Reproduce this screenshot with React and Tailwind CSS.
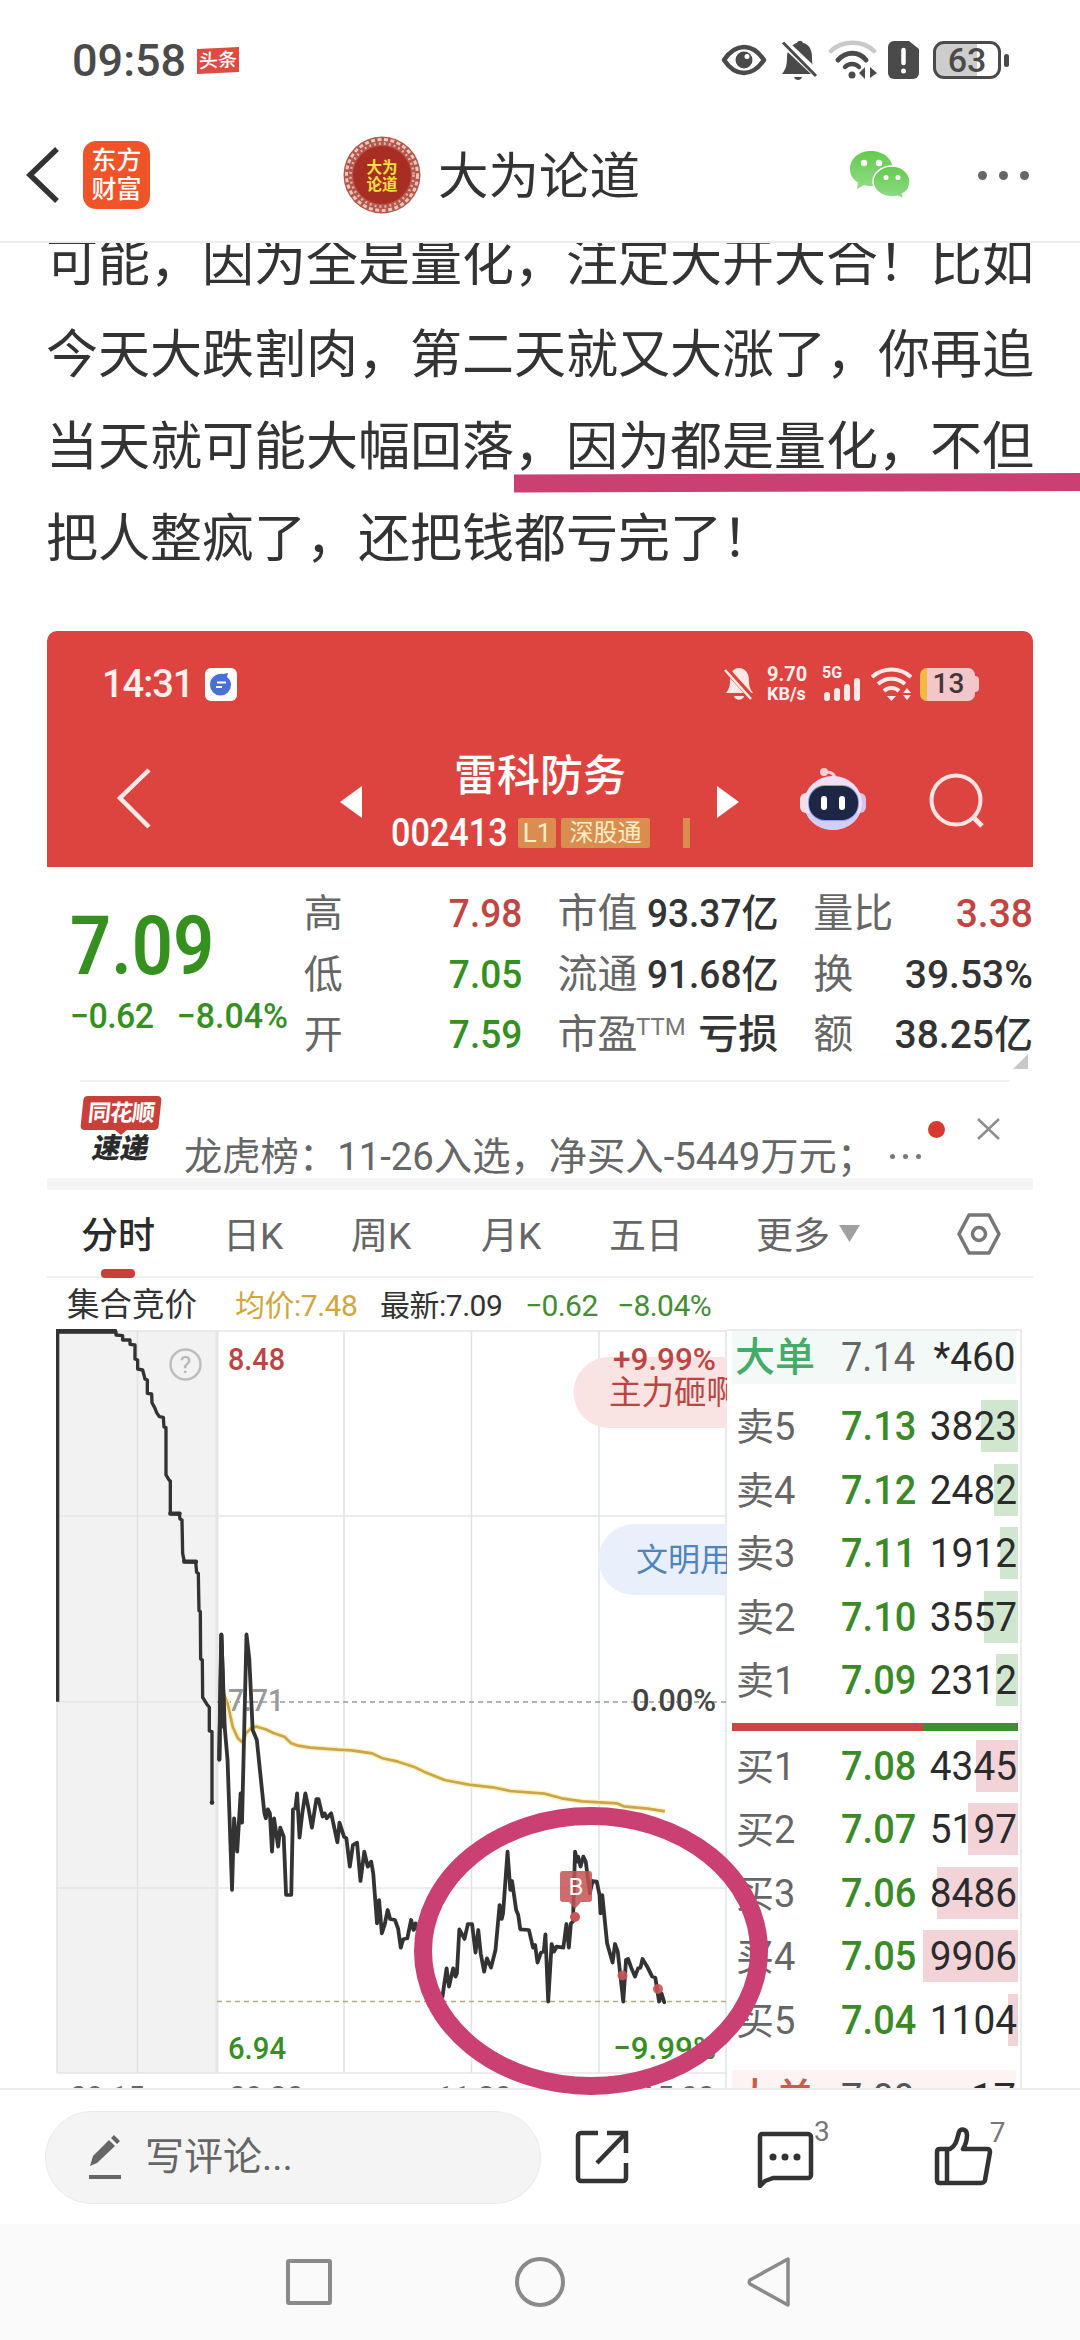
const tabs = [
  { label: '日K', cls: 'ml-[66px] w-[62px]' },
  { label: '周K', cls: 'ml-[66px] w-[62px]' },
  { label: '月K', cls: 'ml-[68px] w-[62px]' },
  { label: '五日', cls: 'ml-[66px] w-[74px]' },
];

const sells = [
  { name: '卖5', price: '7.13', qty: '3823', bar: 37 },
  { name: '卖4', price: '7.12', qty: '2482', bar: 24 },
  { name: '卖3', price: '7.11', qty: '1912', bar: 18 },
  { name: '卖2', price: '7.10', qty: '3557', bar: 34 },
  { name: '卖1', price: '7.09', qty: '2312', bar: 22 },
];

const buys = [
  { name: '买1', price: '7.08', qty: '4345', bar: 42 },
  { name: '买2', price: '7.07', qty: '5197', bar: 50 },
  { name: '买3', price: '7.06', qty: '8486', bar: 81 },
  { name: '买4', price: '7.05', qty: '9906', bar: 95 },
  { name: '买5', price: '7.04', qty: '1104', bar: 10 },
];

const auctionLine =
  '53,1205 53,95 228,95 228,105 248,107 248,120 270,120 270,133 285,135 285,177 293,180 293,207 308,210 315,237 322,240 322,280 335,282 336,308 345,325 350,338 358,350 370,352 372,381 378,383 378,525 388,541 391,543 391,641 418,643 420,657 426,660 428,760 433,785 467,786 470,817 475,820 477,932 481,935 482,1077 487,1080 488,1192 500,1212 508,1222 508,1293 516,1295 516,1510';

const priceLine =
  '56,480 62,103 72,385 80,480 93,870 99,655 108,755 118,580 122,668 135,103 143,175 153,390 165,420 187,640 191,655 197,628 203,640 209,755 215,655 227,740 233,683 243,710 250,885 265,885 270,628 277,625 282,580 289,713 297,640 306,580 315,625 325,683 338,597 344,597 356,650 362,640 368,655 381,640 399,727 405,668 418,710 425,715 435,800 444,735 456,728 466,843 477,755 487,800 497,785 503,820 514,970 520,900 528,1000 536,975 545,930 552,957 566,960 575,985 583,1043 590,1018 602,1015 607,990 613,960 620,990 626,970 645,1040 670,1100 690,1205 704,1190 716,1105 723,1160 735,1105 742,1130 746,1120 753,988 768,1017 778,972 790,972 800,1058 808,990 815,1060 825,1115 833,1075 845,1103 858,1050 870,915 876,957 880,940 893,755 901,870 906,843 918,930 924,945 930,988 955,990 967,1043 973,1035 980,1088 990,1058 998,1055 1003,1003 1011,1205 1021,1032 1028,1055 1035,1040 1055,1043 1064,972 1071,1043 1077,970 1083,965 1089,755 1095,785 1098,770 1105,800 1113,770 1120,785 1132,880 1140,843 1152,845 1160,885 1163,940 1168,885 1182,1030 1198,1088 1205,1032 1213,1055 1229,1205 1237,1080 1243,1077 1252,1103 1263,1130 1272,1105 1279,1103 1285,1077 1300,1103 1313,1130 1322,1133 1333,1205 1340,1180 1348,1207';

const averageLine =
  '68,280 80,310 95,380 110,415 125,428 133,400 150,383 165,380 190,388 215,400 245,410 265,430 285,437 320,443 400,449 440,451 500,460 530,475 575,485 620,500 650,515 710,540 780,554 850,562 900,573 1000,581 1050,595 1110,604 1210,610 1230,619 1300,626 1350,634';

function StatusBar() {
  return (
    <div className="flex h-[120px] items-center pl-[72px] text-[#4a4a4a]">
      <span className="w-[114px] text-[45px] leading-none font-medium">09:58</span>
      <span className="ml-[11px] mt-px flex h-[25px] w-[42px] -skew-y-3 items-center justify-center bg-[#dc4c43] text-[19px] leading-none font-medium text-white">头条</span>
      <div className="ml-auto flex items-center pr-[71px]">
        <svg className="h-[32px] w-[46px]" viewBox="0 0 46 32">
          <path d="M3 16C9 7 16 3 23 3s14 4 20 13c-6 9-13 13-20 13S9 25 3 16z" fill="none" stroke="#4a4a4a" strokeWidth="4.5" strokeLinejoin="round" />
          <circle cx="23" cy="16" r="8.5" fill="#4a4a4a" />
          <circle cx="26" cy="12.500" r="2.500" fill="#fff" />
        </svg>
        <svg className="ml-[13px] h-[42px] w-[38px]" viewBox="0 0 38 42">
          <path d="M2 35c4-5 5-9 5-17 0-7 5-13 10-14 1-3 5-3 6 0 6 1 9 7 9 14 0 8 1 12 3 17z" fill="#4a4a4a" />
          <path d="M3 3l35 33" stroke="#fff" strokeWidth="8" />
          <path d="M3 3.500L36 37" stroke="#4a4a4a" strokeWidth="3" />
          <path d="M14 38h8c-1 4-7 4-8 0z" fill="#4a4a4a" />
        </svg>
        <svg className="ml-[10px] h-[40px] w-[50px]" viewBox="0 0 50 40" fill="none" strokeLinecap="round">
          <path d="M3 11C14 0 35 0 46 11" stroke="#cacaca" strokeWidth="4.500" />
          <path d="M10 20c8-9 21-9 28 0" stroke="#4a4a4a" strokeWidth="5" />
          <path d="M17 27c4-4 10-4 14 0" stroke="#4a4a4a" strokeWidth="4.500" />
          <circle cx="24" cy="35" r="3.500" fill="#4a4a4a" />
          <path d="M37 27v12l-6-6zM42 38V27l7 6z" fill="#4a4a4a" />
        </svg>
        <svg className="ml-[10px] h-[38px] w-[31px]" viewBox="0 0 31 38">
          <path d="M6 0h15l10 8v24a6 6 0 0 1-6 6H6a6 6 0 0 1-6-6V6a6 6 0 0 1 6-6z" fill="#4a4a4a" />
          <path d="M15.500 9v13" stroke="#fff" strokeWidth="4.500" strokeLinecap="round" />
          <circle cx="15.500" cy="30" r="2.500" fill="#fff" />
        </svg>
        <div className="ml-[14px] flex h-[38px] w-[68px] items-center justify-center rounded-[11px] border-[3.5px] border-[#4a4a4a] bg-linear-to-r from-[#cdcdcd] from-66% to-white to-66% text-[34px] leading-none font-medium">
          63
        </div>
        <div className="ml-[3px] h-[13px] w-[5px] rounded-full bg-[#4a4a4a]" />
      </div>
    </div>
  );
}

function Header() {
  return (
    <header className="flex h-[123px] items-center border-b-2 border-[#ececec] pb-[11px] pl-[25px]">
      <svg className="h-[58px] w-[36px]" viewBox="0 0 36 58">
        <path d="M32 3L5 29l27 26" fill="none" stroke="#333" strokeWidth="5.500" />
      </svg>
      <div className="ml-[22px] flex h-[68px] w-[67px] flex-col items-center justify-center rounded-[13px] bg-[#ee5428] text-[25px] leading-[29px] font-medium text-white">
        <span>东方</span>
        <span>财富</span>
      </div>
      <svg className="ml-[193px] h-[78px] w-[78px]" viewBox="0 0 78 78">
        <circle cx="39" cy="39" r="38.500" fill="#b5564b" />
        <circle cx="39" cy="39" r="35.500" fill="none" stroke="#e9c8bd" strokeWidth="3" strokeDasharray="4 2.500" />
        <circle cx="39" cy="39" r="31.500" fill="none" stroke="#dfb3a7" strokeWidth="2.500" strokeDasharray="2 3" />
        <circle cx="39" cy="39" r="29" fill="#a82e23" />
        <text x="39" y="37" textAnchor="middle" fontSize="15.500" fontWeight="700" fill="#f6e13c">大为</text>
        <text x="39" y="54" textAnchor="middle" fontSize="15.500" fontWeight="700" fill="#f6e13c">论道</text>
      </svg>
      <h1 className="mt-[5px] ml-[17px] w-[204px] text-[50.5px] leading-none whitespace-nowrap text-[#333]">大为论道</h1>
      <svg className="ml-[207px] h-[50px] w-[62px]" viewBox="0 0 62 50">
        <defs>
          <linearGradient id="wx" x1="0" y1="0" x2="0" y2="1">
            <stop offset="0" stopColor="#62cb4d" />
            <stop offset="1" stopColor="#92db88" />
          </linearGradient>
        </defs>
        <path d="M22 1C10 1 1 8.500 1 19c0 6 3 10.500 8 13.500L8 39l7-4c2 .7 5 1 7 1 12 0 22-7 22-17S34 1 22 1z" fill="url(#wx)" />
        <path d="M43 16c-10.500 0-19 7-19 15.500S32.500 47 43 47c2 0 4-.3 6-.8l6 3-1.500-5C58.500 41.500 61 37 61 31.500 61 23 53 16 43 16z" fill="url(#wx)" stroke="#fff" strokeWidth="1.500" />
        <circle cx="15" cy="13" r="3.200" fill="#fff" />
        <circle cx="30" cy="13" r="3.200" fill="#fff" />
        <circle cx="37" cy="27.500" r="2.500" fill="#fff" />
        <circle cx="49" cy="27.500" r="2.500" fill="#fff" />
      </svg>
      <div className="ml-[67px] flex gap-3">
        <i className="size-[9px] rounded-full bg-[#666]" />
        <i className="size-[9px] rounded-full bg-[#666]" />
        <i className="size-[9px] rounded-full bg-[#666]" />
      </div>
    </header>
  );
}

function StockHeader() {
  return (
    <div className="h-[236px] rounded-t-[10px] bg-[#dd433f] text-white">
      <div className="flex h-[106px] items-center pl-[55px] text-[#fff0ee]">
        <span className="text-[38px] leading-none font-medium tracking-[-1px]">14:31</span>
        <span className="ml-[12px] flex h-[33px] w-[32px] items-center justify-center rounded-[6px] bg-white">
          <svg className="h-[24px] w-[24px]" viewBox="0 0 24 24">
            <path d="M1 13C1 5 8 1 14 2l5-1-1 4c3 2 4 5 4 8a10 10 0 0 1-21 0z" fill="#4a6fd6" />
            <path d="M8 10.500h9M7 15h6" stroke="#fff" strokeWidth="2.200" />
          </svg>
        </span>
        <div className="ml-auto flex items-center pr-[54px]">
          <svg className="h-[34px] w-[30px]" viewBox="0 0 30 34">
            <path d="M2 26c3-4 4-7 4-12C6 6 9 1 15 1s10 5 10 13c0 5 1 8 4 12zM10 29h10c-1 5-9 5-10 0z" fill="#ffe9e7" />
            <path d="M2 2l26 29" stroke="#dd433f" strokeWidth="6" />
            <path d="M1 3l26 29" stroke="#ffe9e7" strokeWidth="2.500" />
          </svg>
          <div className="ml-[13px] flex w-[41px] flex-col text-[20px] leading-[19px] font-bold">
            <span>9.70</span>
            <span className="text-[18px]">KB/s</span>
          </div>
          <div className="ml-[14px] w-[42px]">
            <div className="h-[10px] text-[16px] leading-[9px] font-bold">5G</div>
            <div className="-mt-[1px] flex h-[24px] items-end gap-[4.5px] pl-[2px]">
              <i className="h-[9px] w-[5.5px] rounded-sm bg-[#ffe9e7]" />
              <i className="h-[13px] w-[5.500px] rounded-sm bg-[#ffe9e7]" />
              <i className="h-[17px] w-[5.500px] rounded-sm bg-[#ffe9e7]" />
              <i className="h-[23px] w-[5.500px] rounded-sm bg-[#ffe9e7]" />
            </div>
          </div>
          <svg className="ml-[7px] h-[34px] w-[41px]" viewBox="0 0 41 34" fill="none" stroke="#ffe9e7" strokeWidth="4">
            <path d="M1 10c11-10 28-10 39 0M7 17c8-7 19-7 27 0M13 24c4-4 11-4 15 0" />
            <path d="M16 29h9l-4.500 5zM32 26l4-5 4 5zM32 28l4 5 4-5z" fill="#ffe9e7" stroke="none" />
          </svg>
          <div className="ml-[8px] flex h-[33px] w-[55px] items-center justify-center rounded-[7px] border-l-[7px] border-[#f4b942] bg-[#f3c6c9] pr-[5px] text-[28px] leading-none font-medium text-[#433536]">
            13
          </div>
          <div className="h-[16px] w-[4px] rounded-r bg-[#f3c6c9]" />
        </div>
      </div>
      <div className="flex h-[124px] items-center pl-[69px]">
        <svg className="h-[62px] w-[36px]" viewBox="0 0 36 62">
          <path d="M33 2L4 30l29 29" fill="none" stroke="#ffe9e7" strokeWidth="4.500" />
        </svg>
        <svg className="mt-[5px] ml-[188px] h-[32px] w-[22px]" viewBox="0 0 22 32">
          <path d="M22 0v32L0 16z" fill="#fff" />
        </svg>
        <div className="ml-[29px] w-[326px]">
          <div className="pl-[63px] text-[43px] leading-[50px] font-medium">雷科防务</div>
          <div className="mt-[17px] flex h-[30px] items-center">
            <span className="w-[127px] origin-left scale-x-[0.9] text-[38px] leading-none font-medium">002413</span>
            <span className="flex h-[30px] w-[38px] items-center justify-center rounded-[2px] bg-[#d98e4f] text-[26px] leading-none text-[#ffecc4]">L1</span>
            <span className="ml-[5px] flex h-[30px] w-[89px] items-center justify-center rounded-[2px] bg-[#d98e4f] text-[24px] leading-none text-[#ffecc4]">深股通</span>
            <span className="ml-[33px] h-[30px] w-[7px] bg-[#d98e4f]" />
          </div>
        </div>
        <svg className="mt-[5px] h-[32px] w-[22px]" viewBox="0 0 22 32">
          <path d="M0 0v32l22-16z" fill="#fff" />
        </svg>
        <svg className="ml-[61px] h-[64px] w-[66px]" viewBox="0 0 66 64">
          <path d="M35 12c0-5-3-7-9-7" fill="none" stroke="#fbd0d4" strokeWidth="3" />
          <circle cx="24" cy="5" r="4" fill="#fbd0d4" />
          <rect x="0" y="26" width="12" height="20" rx="6" fill="#fbdde6" />
          <rect x="54" y="26" width="12" height="20" rx="6" fill="#d5c3f3" />
          <ellipse cx="33" cy="36" rx="29" ry="27" fill="#f1dff3" />
          <path d="M6 46c8 22 46 22 54 0z" fill="#d3cdf8" />
          <rect x="8" y="18" width="51" height="36" rx="17" fill="#8ba0ea" />
          <rect x="9" y="19" width="49" height="34" rx="16" fill="#1d2745" />
          <rect x="21" y="29" width="6" height="14" rx="3" fill="#fff" />
          <rect x="39" y="29" width="6" height="14" rx="3" fill="#fff" />
        </svg>
        <svg className="mt-[3px] ml-[63px] h-[56px] w-[56px]" viewBox="0 0 56 56" fill="none" stroke="#ffe4e2" strokeWidth="4">
          <circle cx="27" cy="27" r="24.500" />
          <path d="M44 44l9 9" strokeWidth="5" />
        </svg>
      </div>
    </div>
  );
}

function Stats() {
  return (
    <div className="flex h-[213px] pt-[17px] text-[39px] text-[#333]">
      <div className="w-[257px] pl-[23px] text-[#35901f]">
        <div className="mt-[17px] h-[87px] w-[200px] origin-left scale-x-[0.88] text-[82px] leading-[90px] font-semibold">7.09</div>
        <div className="mt-[8px] flex origin-left scale-x-[0.97] text-[35px] leading-[42px] font-medium whitespace-nowrap">
          <span className="w-[110px] tracking-[-0.6px]">−0.62</span>
          <span>−8.04%</span>
        </div>
      </div>
      <div className="w-[219px] leading-[60.5px]">
        <div className="flex justify-between">
          <span className="text-[#666]">高</span>
          <span className="origin-right scale-x-[0.95] font-medium text-[#c14543]">7.98</span>
        </div>
        <div className="flex justify-between">
          <span className="text-[#666]">低</span>
          <span className="origin-right scale-x-[0.95] font-medium text-[#35901f]">7.05</span>
        </div>
        <div className="flex justify-between">
          <span className="text-[#666]">开</span>
          <span className="origin-right scale-x-[0.95] font-medium text-[#35901f]">7.59</span>
        </div>
      </div>
      <div className="ml-[35px] w-[221px] leading-[60.5px] whitespace-nowrap">
        <div className="flex justify-between">
          <span className="text-[40px] text-[#666]">市值</span>
          <span className="origin-right scale-x-[0.95] font-medium">93.37亿</span>
        </div>
        <div className="flex justify-between">
          <span className="text-[40px] text-[#666]">流通</span>
          <span className="origin-right scale-x-[0.95] font-medium">91.68亿</span>
        </div>
        <div className="flex justify-between">
          <span className="text-[40px] text-[#666]">市盈</span>
          <span className="-mt-[8px] -ml-[14px] text-[24px] text-[#777]">TTM</span>
          <span className="text-[40px] font-medium">亏损</span>
        </div>
      </div>
      <div className="ml-[35px] w-[220px] leading-[60.5px] whitespace-nowrap">
        <div className="flex justify-between">
          <span className="text-[40px] text-[#666]">量比</span>
          <span className="font-medium text-[#c14543]">3.38</span>
        </div>
        <div className="flex justify-between">
          <span className="text-[40px] text-[#666]">换</span>
          <span className="font-medium">39.53%</span>
        </div>
        <div className="flex justify-between">
          <span className="text-[40px] text-[#666]">额</span>
          <span className="font-medium">38.25亿</span>
        </div>
        <svg className="-mt-[12px] ml-auto mr-[5px] h-[15px] w-[15px]" viewBox="0 0 15 15">
          <path d="M15 0v15H0z" fill="#c9c9c9" />
        </svg>
      </div>
    </div>
  );
}

function News() {
  return (
    <div className="ml-[33px] flex h-[98px] w-[930px] border-t-2 border-[#f0f0f0]">
      <div className="flex w-[82px] flex-col items-center pt-[14px]">
        <div className="flex h-[34px] w-[78px] -skew-x-6 items-center justify-center rounded-[4px] bg-[#c9403b] text-[23px] leading-none font-bold tracking-[-1px] text-white">同花顺</div>
        <svg className="h-[5px] w-[12px]" viewBox="0 0 12 5">
          <path d="M0 0h12L6 5z" fill="#c9403b" />
        </svg>
        <div className="-skew-x-12 text-[28px] leading-[28px] font-black text-[#2b2b2b]">速递</div>
      </div>
      <div className="ml-[22px] w-[702px] pt-[54px] text-[38.3px] leading-[42px] whitespace-nowrap text-[#666]">龙虎榜：11-26入选，净买入-5449万元；</div>
      <div className="flex h-[44px] w-[50px] shrink-0 items-center gap-[8px] self-end pl-[4px]">
        <i className="size-[5px] rounded-full bg-[#777]" />
        <i className="size-[5px] rounded-full bg-[#777]" />
        <i className="size-[5px] rounded-full bg-[#777]" />
      </div>
      <i className="mt-[39px] -ml-[8px] size-[17px] shrink-0 rounded-full bg-[#d53c31]" />
      <svg className="mt-[36px] ml-[32px] h-[22px] w-[23px] shrink-0" viewBox="0 0 23 22">
        <path d="M1 1l21 20M22 1L1 21" stroke="#8d8d8d" strokeWidth="2.500" />
      </svg>
    </div>
  );
}

function Tabs() {
  return (
    <div className="flex h-[88px] items-start border-b-2 border-[#f1f1f1] pl-[34px] text-[37px] leading-[50px] whitespace-nowrap text-[#666]">
      <div className="w-[76px] pt-[22px] font-medium text-[#2b2b2b]">
        分时
        <div className="mt-[7px] ml-[20px] h-[9px] w-[34px] rounded-[4px] bg-[#c9403b]" />
      </div>
      {tabs.map((t) => (
        <span key={t.label} className={'pt-[22px] ' + t.cls}>{t.label}</span>
      ))}
      <span className="ml-[73px] pt-[22px]">更多</span>
      <svg className="mt-[35px] ml-[9px] h-[18px] w-[21px]" viewBox="0 0 21 18">
        <path d="M0 0h21L10.500 17z" fill="#a0a0a0" />
      </svg>
      <svg className="mt-[23px] ml-[97px] h-[42px] w-[44px]" viewBox="0 0 44 42" fill="none" stroke="#777" strokeWidth="3.500">
        <path d="M12 2h20l10 19-10 19H12L2 21z" strokeLinejoin="round" />
        <circle cx="22" cy="21" r="6.500" />
      </svg>
    </div>
  );
}

function Chart() {
  return (
    <svg className="h-[759px] w-[680px] shrink-0" viewBox="47 1329 680 759">
      <rect x="57" y="1331" width="160" height="742" fill="#f2f2f2" />
      <path d="M57 1331H727M57 1516H727M57 1888H727M57 1702H217M57 2073H727" stroke="#e6e6e6" strokeWidth="1.500" />
      <path d="M137.500 1331V2073M344 1331V2073M471.500 1331V2073M599 1331V2073M726 1331V2088M57 1331V2073" stroke="#e0e3e4" strokeWidth="1.500" />
      <path d="M217 1331V2073" stroke="#e6e6e6" strokeWidth="3" />
      <path d="M217 1702H727" stroke="#999" strokeWidth="1.500" strokeDasharray="5 4" />
      <path d="M217 2001.500H727" stroke="#b5ad7c" strokeWidth="1.500" strokeDasharray="5 4" />

      <path d="M727 1357H609a35.500 35.500 0 0 0 0 71H727z" fill="#f9e3e3" />
      <text x="609" y="1404" fontSize="32.500" fill="#bb4542">主力砸啊</text>
      <path d="M727 1524H634a35.500 35.500 0 0 0 0 71H727z" fill="#e9f0fb" />
      <text x="636" y="1571" fontSize="32" fill="#4f84bd">文明用语</text>

      <circle cx="185.500" cy="1364.500" r="15" fill="none" stroke="#bdbdbd" strokeWidth="2.500" />
      <text x="185.500" y="1373" fontSize="24" textAnchor="middle" fill="#b5b5b5">?</text>

      <g fontSize="32" fontWeight="500">
        <text x="228" y="1370" textLength="57" lengthAdjust="spacingAndGlyphs" fill="#bb4542">8.48</text>
        <text x="613" y="1370" textLength="103" lengthAdjust="spacingAndGlyphs" fill="#bb4542">+9.99%</text>
        <text x="228" y="1711" textLength="56" lengthAdjust="spacingAndGlyphs" fill="#999">7.71</text>
        <text x="632" y="1711" textLength="84" lengthAdjust="spacingAndGlyphs" fill="#444">0.00%</text>
        <text x="228" y="2059" textLength="58" lengthAdjust="spacingAndGlyphs" fill="#35901f">6.94</text>
        <text x="613" y="2059" textLength="103" lengthAdjust="spacingAndGlyphs" fill="#35901f">−9.99%</text>
      </g>
      <g fontSize="30" fill="#666">
        <text x="70" y="2107">09:15</text>
        <text x="229" y="2107">09:30</text>
        <text x="437" y="2107">11:30</text>
        <text x="640" y="2107">15:00</text>
      </g>

      <g fill="none" strokeLinejoin="round">
        <g transform="translate(40 1300) scale(0.3333)">
          <polyline points={auctionLine} stroke="#333" strokeWidth="10" />
          <path d="M48 94H230" stroke="#333" strokeWidth="14" />
          <path d="M391 641h28M433 785h35" stroke="#333" strokeWidth="13" strokeLinecap="round" />
          <circle cx="516" cy="1508" r="7" fill="#333" />
        </g>
        <g transform="translate(200 1600) scale(0.3444 0.3333)">
          <polyline points={averageLine} stroke="#fdf0bd" strokeWidth="16" />
          <polyline points={averageLine} stroke="#c9a64a" strokeWidth="8" />
          <polyline points={priceLine} stroke="#333" strokeWidth="11" strokeLinecap="round" />
          <path d="M56 480L62 105l8 280" stroke="#333" strokeWidth="12" />
        </g>
      </g>

      <path d="M563 1871h26a3 3 0 0 1 3 3v25a3 3 0 0 1-3 3h-8l-6 7-6-7h-6a3 3 0 0 1-3-3v-25a3 3 0 0 1 3-3z" fill="#c45252" fillOpacity="0.85" />
      <text x="576" y="1895" fontSize="24" textAnchor="middle" fill="#fff">B</text>
      <circle cx="575" cy="1917" r="5" fill="#c95555" />
      <circle cx="622.500" cy="1975.500" r="5" fill="#c95555" fillOpacity="0.9" />
      <circle cx="658" cy="1989" r="5" fill="#c95555" fillOpacity="0.9" />
    </svg>
  );
}

function BookRow({ row, barCls }) {
  return (
    <div className="relative flex h-[63.5px] items-center pl-[9px] whitespace-nowrap">
      <i className={'absolute top-[6px] right-[2px] h-[52px] ' + barCls} style={{ width: row.bar }} />
      <span className="relative mt-[3px] w-[105px] text-[38px] leading-none text-[#666]">{row.name}</span>
      <span className="relative mt-[3px] origin-left scale-x-[0.95] text-[40px] leading-none font-medium text-[#3b8a28]">{row.price}</span>
      <span className="relative mt-[3px] ml-auto origin-right scale-x-[0.97] pr-[3px] text-[40px] leading-none text-[#2b2b2b]">{row.qty}</span>
    </div>
  );
}

function OrderBook() {
  return (
    <div className="w-[295px] border-t-2 border-r-2 border-[#ececec]">
      <div className="mr-[4px] ml-[5px] flex h-[53px] items-center bg-[#f3f9f7] pl-[3px] text-[40px] leading-none">
        <span className="w-[106px] font-medium text-[#45ab68]">大单</span>
        <span className="origin-left scale-x-[0.95] text-[#666]">7.14</span>
        <span className="ml-auto origin-right scale-x-[0.97] text-[#2b2b2b]">*460</span>
      </div>
      <div className="pt-[10px]">
        {sells.map((row) => (
          <BookRow key={row.name} row={row} barCls="bg-[#d0e6cf]" />
        ))}
      </div>
      <div className="mt-[11px] mr-[2px] ml-[5px] flex h-[8px]">
        <div className="w-[191px] bg-[#cf4442]" />
        <div className="flex-1 bg-[#3a922b]" />
      </div>
      <div className="pt-[3px]">
        {buys.map((row) => (
          <BookRow key={row.name} row={row} barCls="bg-[#f2d4d8]" />
        ))}
      </div>
      <div className="mt-[19px] mr-[4px] ml-[5px] flex h-[58px] items-center bg-[#fdf3f3] pl-[3px] text-[40px] leading-none">
        <span className="w-[106px] font-medium text-[#cf5a4c]">大单</span>
        <span className="origin-left scale-x-[0.95] text-[#555]">7.09</span>
        <span className="ml-auto text-[#2b2b2b]">17</span>
      </div>
    </div>
  );
}

function BottomBar() {
  return (
    <div className="flex h-[136px] items-center border-t-2 border-[#ececec] bg-white pl-[45px]">
      <div className="flex h-[93px] w-[496px] items-center rounded-full border border-[#eaeaea] bg-[#f4f4f4] pl-[43px] text-[39px] leading-none text-[#666]">
        <svg className="h-[44px] w-[34px]" viewBox="0 0 34 44" fill="#666">
          <path d="M1 31l3-10L20 5l6 6L8 28zM22 3l3-3 6 6-3 3zM0 40h32v4H0z" />
        </svg>
        <span className="ml-[22px]">写评论...</span>
      </div>
      <svg className="ml-[33px] h-[56px] w-[56px]" viewBox="0 0 56 56" fill="none" stroke="#333" strokeWidth="4.500">
        <path d="M24 4H7a3 3 0 0 0-3 3v42a3 3 0 0 0 3 3h42a3 3 0 0 0 3-3V34M33 4h19v20M51 5L23 34" />
      </svg>
      <svg className="mt-[4px] ml-[126px] h-[58px] w-[58px]" viewBox="0 0 58 58" fill="none" stroke="#333" strokeWidth="4.500">
        <path d="M6 4h46a3 3 0 0 1 3 3v38a3 3 0 0 1-3 3H17l-8 3-5 5V6a2 2 0 0 1 2-2z" strokeLinejoin="round" />
        <g fill="#333" stroke="none">
          <circle cx="17" cy="27" r="3.500" />
          <circle cx="29" cy="27" r="3.500" />
          <circle cx="41" cy="27" r="3.500" />
        </g>
      </svg>
      <span className="-mt-[50px] text-[28px] leading-none text-[#777]">3</span>
      <svg className="ml-[104px] h-[60px] w-[60px]" viewBox="0 0 60 60" fill="none" stroke="#333" strokeWidth="4.500" strokeLinejoin="round">
        <path d="M6 22h10c7-4 7-11 9-17 2-4 8-3 8 3 0 5-1 9-4 14h24c2 0 3 1 3 3l-5 28c0 2-2 3-4 3H6c-2 0-3-1-3-3V25c0-2 1-3 3-3zM13 22v34" />
      </svg>
      <span className="-mt-[48px] -ml-[4px] text-[28px] leading-none text-[#777]">7</span>
    </div>
  );
}

function SystemNav() {
  return (
    <div className="flex h-[116px] items-center bg-[#fafafa] pl-[286px]">
      <div className="size-[46px] rounded-[3px] border-4 border-[#8a8a8a]" />
      <div className="ml-[183px] size-[50px] rounded-full border-4 border-[#8a8a8a]" />
      <svg className="ml-[182px] h-[52px] w-[46px]" viewBox="0 0 46 52">
        <path d="M41 3v46L3 28c-1-1-1-3 0-4z" fill="none" stroke="#8a8a8a" strokeWidth="3.500" strokeLinejoin="round" />
      </svg>
    </div>
  );
}

export default function App() {
  return (
    <div lang="zh-CN" className="relative flex h-[2340px] w-[1080px] flex-col overflow-hidden bg-white font-['Roboto','Noto_Sans_CJK_SC',sans-serif]">
      <StatusBar />
      <Header />
      <main className="h-[1845px] overflow-hidden">
        <div className="-mt-[25px] pl-[46px] text-[52px] leading-[92px] whitespace-nowrap text-[#333]">
          <p>可能，因为全是量化，注定大开大合！比如</p>
          <p>今天大跌割肉，第二天就又大涨了，你再追</p>
          <p>当天就可能大幅回落，因为都是量化，不但</p>
          <p>把人整疯了，还把钱都亏完了！</p>
        </div>
        <section className="mt-[45px] ml-[47px] w-[986px]">
          <StockHeader />
          <Stats />
          <News />
          <div className="h-[12px] bg-[#f4f4f4]" />
          <Tabs />
          <div className="flex h-[51px] items-center pt-[4px] pl-[20px] text-[30px] leading-none whitespace-nowrap text-[#333]">
            <span className="w-[168px] text-[32.500px]">集合竞价</span>
            <span className="w-[145px] tracking-[-0.5px] text-[#d0a63d]">均价:7.48</span>
            <span className="w-[145px] tracking-[-0.5px]">最新:7.09</span>
            <span className="w-[92px] tracking-[-0.6px] text-[#458c35]">−0.62</span>
            <span className="tracking-[-0.6px] text-[#458c35]">−8.04%</span>
          </div>
          <div className="flex h-[759px]">
            <Chart />
            <OrderBook />
          </div>
        </section>
      </main>
      <BottomBar />
      <SystemNav />

      {/* hand-drawn marks over the article */}
      <svg className="pointer-events-none absolute inset-0 h-[2340px] w-[1080px]" viewBox="0 0 1080 2340">
        <path d="M514 474.500L1080 473v18L514 492.500z" fill="#ca4073" />
        <ellipse cx="591" cy="1951" rx="168" ry="135" fill="none" stroke="#ca4073" strokeWidth="18" />
      </svg>
    </div>
  );
}
